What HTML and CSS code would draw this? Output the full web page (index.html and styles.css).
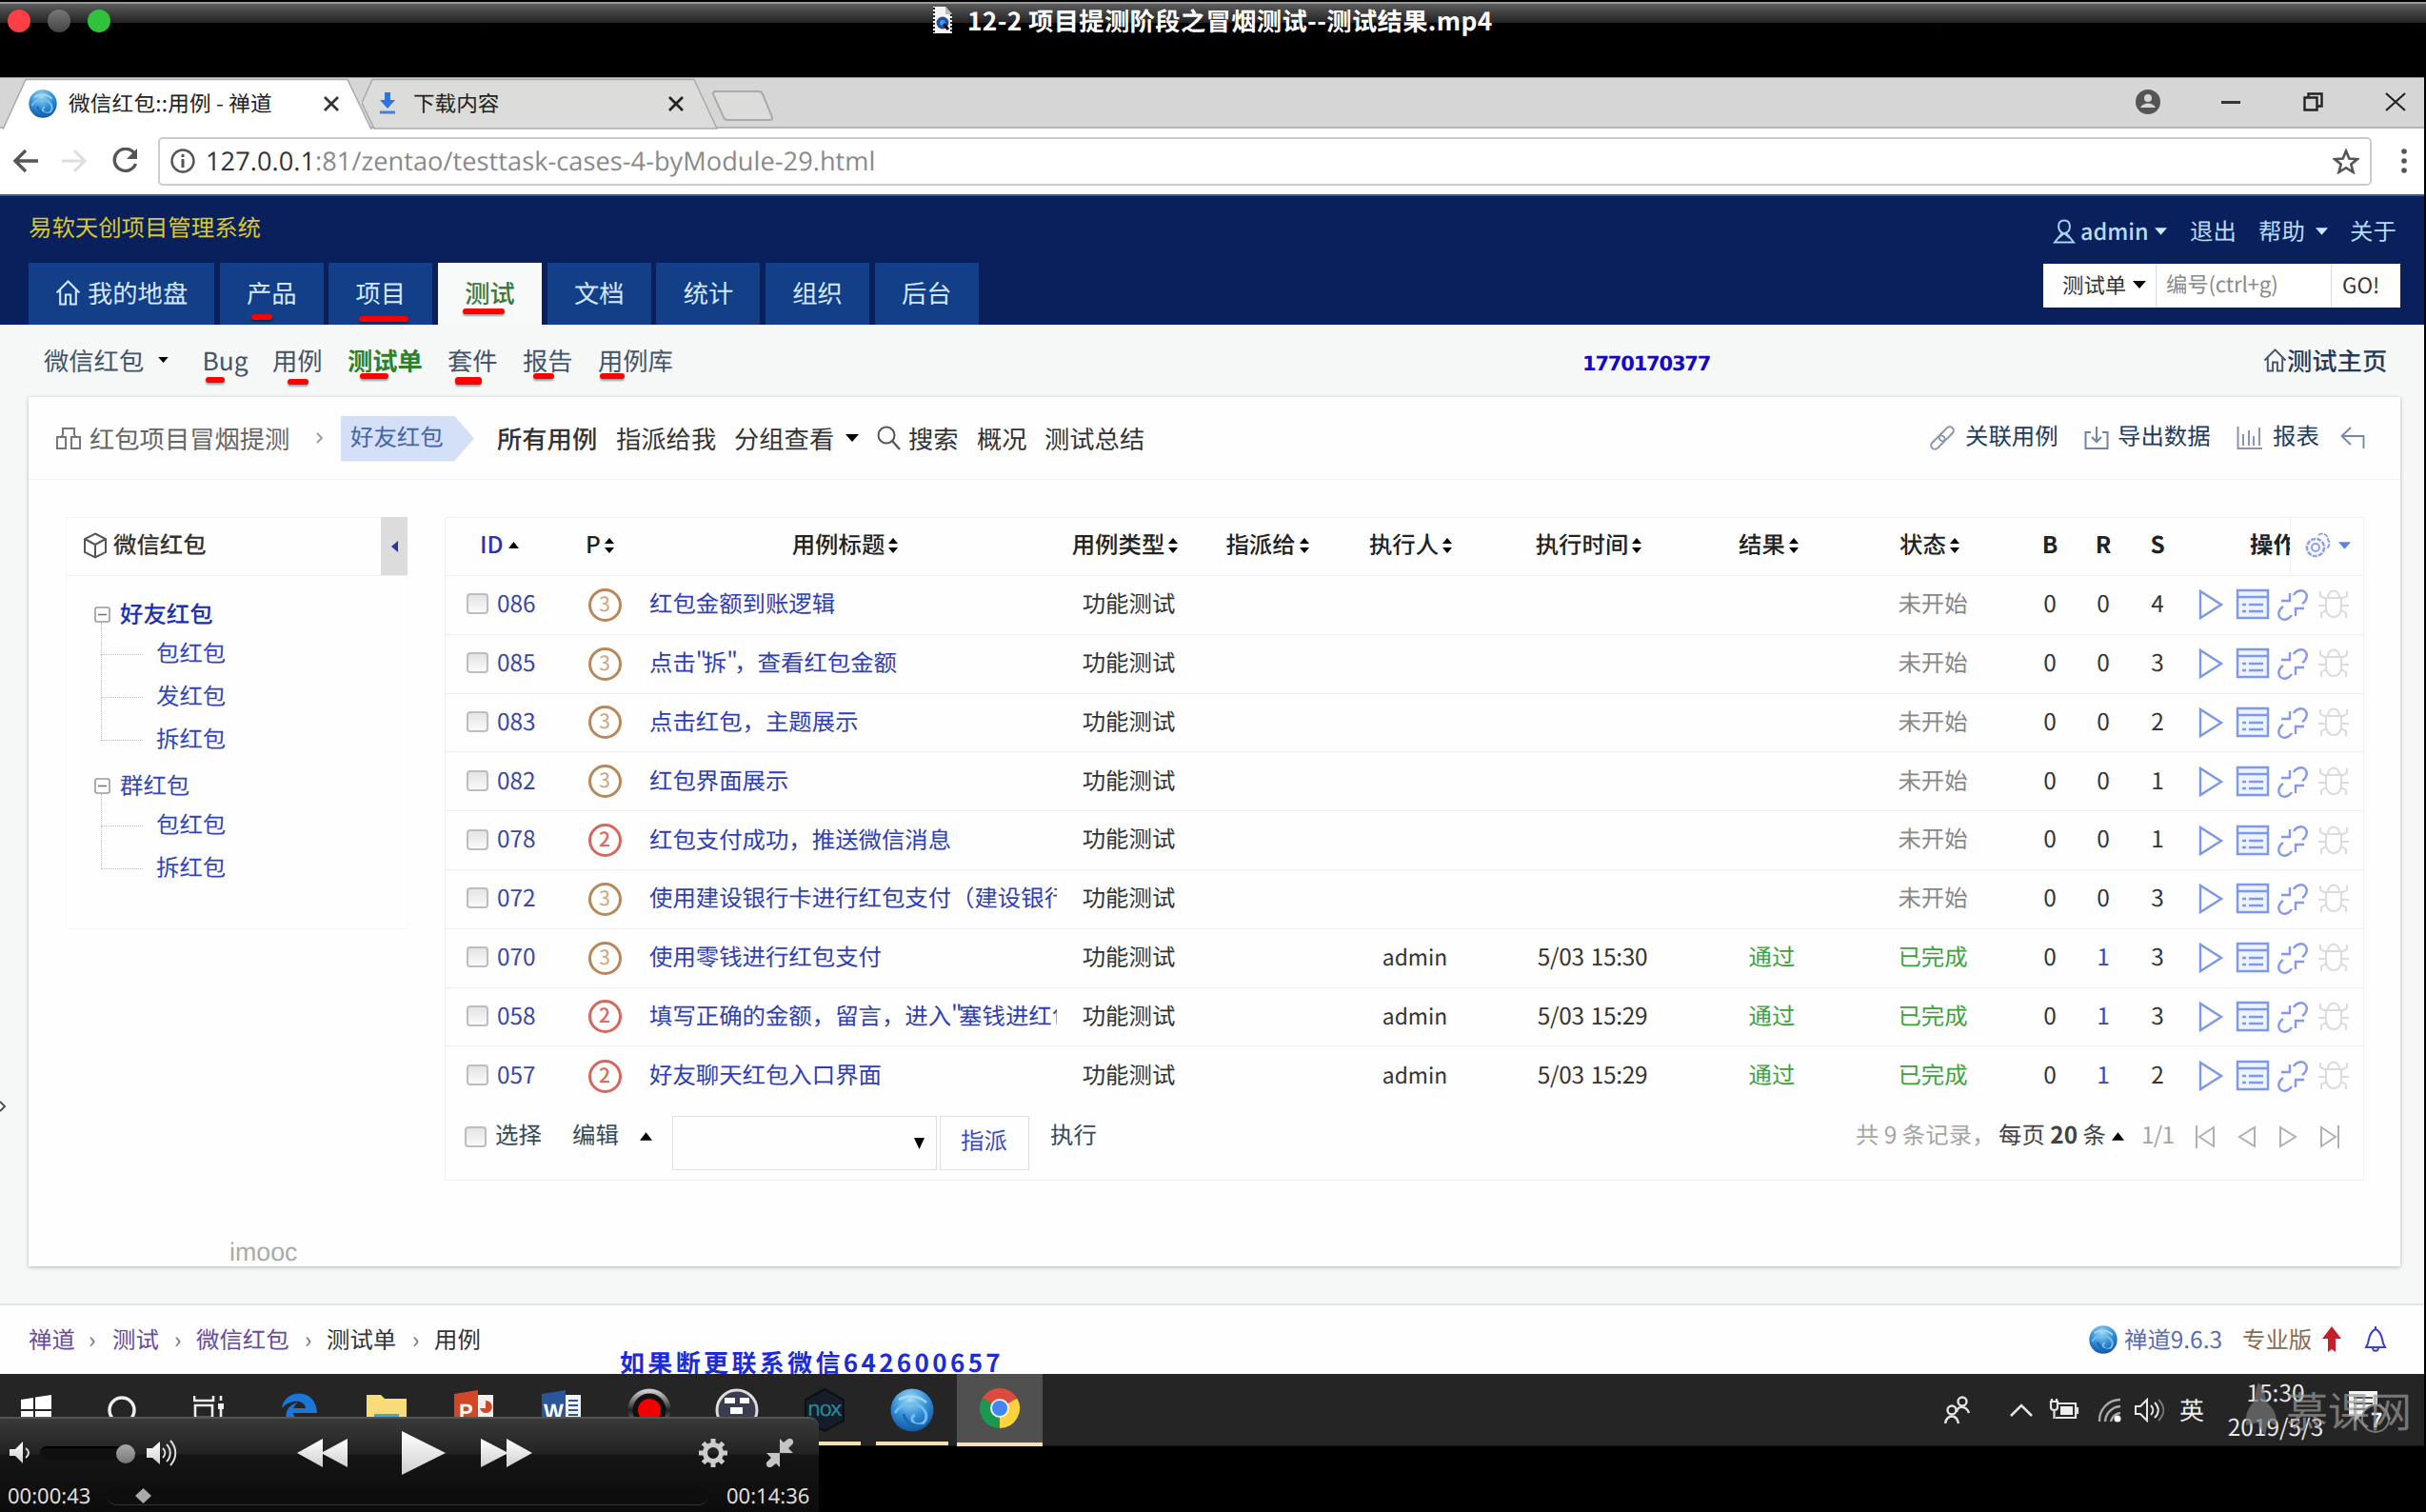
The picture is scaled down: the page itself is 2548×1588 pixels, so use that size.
FILE: index.html
```html
<!DOCTYPE html>
<html lang="zh-CN">
<head>
<meta charset="utf-8">
<title>12-2 项目提测阶段之冒烟测试--测试结果.mp4</title>
<link rel="stylesheet" href="styles.css">
</head>
<body>
<svg class="sprite" aria-hidden="true">
  <defs>
    <radialGradient id="globe" cx="45%" cy="25%" r="80%"><stop offset="0" stop-color="#a5dcf6"/><stop offset=".5" stop-color="#3590d8"/><stop offset="1" stop-color="#0c4f9e"/></radialGradient>
    <linearGradient id="metal" x1="0" y1="0" x2="0" y2="1"><stop offset="0" stop-color="#fff"/><stop offset="1" stop-color="#cfcfcf"/></linearGradient>
    <linearGradient id="ring" x1="0" y1="0" x2="0" y2="1"><stop offset="0" stop-color="#ccc"/><stop offset=".5" stop-color="#222"/><stop offset="1" stop-color="#999"/></linearGradient>
  </defs>
  <symbol id="zen" viewBox="0 0 46 46"><circle cx="23" cy="23" r="22.5" fill="url(#globe)"/><path d="M5 26C12 14 27 14 34 21c6 6 5 15-3 17-8 1-11-8-5-10" fill="none" stroke="#6fc0ec" stroke-width="3"/><path d="M9 12c9-5 20-5 29 3" fill="none" stroke="#a4daf5" stroke-width="2.500"/><path d="M14 27c2 9 11 14 20 12" fill="none" stroke="#1a66b4" stroke-width="3"/></symbol>
  <symbol id="sort" viewBox="0 0 12 18"><path d="M6 1l5 6H1zM6 17l5-6H1z"/></symbol>
  <symbol id="down" viewBox="0 0 14 8"><path d="M0 0h14L7 8z"/></symbol>
  <symbol id="up" viewBox="0 0 14 9"><path d="M0 9h14L7 0z"/></symbol>
  <symbol id="house" viewBox="0 0 26 26"><path d="M1.500 13L13 1.500 24.500 13M5 10v14.500h5.500V15h5v9.500H21V10" fill="none" stroke="currentColor" stroke-width="2"/></symbol>
  <symbol id="minus" viewBox="0 0 17 17"><rect x="1" y="1" width="15" height="15" rx="2" fill="#fff" stroke="#999" stroke-width="1.600"/><path d="M4 8.500h9" stroke="#777" stroke-width="1.600"/></symbol>
  <symbol id="ops" viewBox="0 0 160 34">
    <path d="M2 3v28l22-14z" fill="none" stroke="#7b98e6" stroke-width="2.400"/>
    <path transform="translate(39)" d="M2 2h32v29H2zM2 9h32M7 17h4M14 17h15M7 24h4M14 24h15" fill="#eef4ff" stroke="#7d98ec" stroke-width="2.400"/>
    <path transform="translate(82)" d="M18 7c3-5 9-6 12-3s2 9-3 12M7 19c-5 3-6 9-3 12s9 2 12-3M14 5v8H5M29 21h-9v8" fill="none" stroke="#8598ec" stroke-width="2.400"/>
    <path transform="translate(124)" d="M10 10h16v11c0 12-16 12-16 0zM12 10c0-10 12-10 12 0M10 11L4 8V3M26 11l6-3V3M9 18H2M27 18h7M10 23l-5 3v5M26 23l5 3v5" fill="none" stroke="#dcdcdc" stroke-width="2"/>
  </symbol>
</svg>

<header class="titlebar">
  <div class="lights"><i class="light red"></i><i class="light grey"></i><i class="light green"></i></div>
  <div class="movie">
    <svg width="22" height="30" viewBox="0 0 22 30"><path d="M1 1h13l7 8v20H1z" fill="#f4f4f4"/><path d="M14 1l7 8h-7z" fill="#bbb"/><path d="M2 2v27M20 9v20" stroke="#222" stroke-width="2" stroke-dasharray="2 2"/><circle cx="11" cy="18" r="6.500" fill="#274d96"/><circle cx="11" cy="18" r="3" fill="#27a3ff"/><path d="M12 19l5 6" stroke="#111" stroke-width="3"/></svg>
    <span>12-2 项目提测阶段之冒烟测试--测试结果.mp4</span>
  </div>
</header>

<main class="video">
  <div class="tabstrip">
    <div class="tab on">
      <svg class="shape" width="388" height="54"><path d="M0 54L24 1.500h338L387 54" fill="#fff" stroke="#aaa" stroke-width="1.500"/></svg>
      <svg width="30" height="30"><use href="#zen"/></svg><span>微信红包::用例 - 禅道</span>
      <svg width="16" height="16"><path d="M1 1l14 14M15 1L1 15" stroke="#333" stroke-width="2.800"/></svg>
    </div>
    <div class="tab off">
      <svg class="shape" width="376" height="54"><path d="M0 26L11 1.500h338L373 53H13z" fill="#dcdddb" stroke="#aaa" stroke-width="1.500"/></svg>
      <svg width="18" height="23"><path d="M6 0h6v8h5l-8 9-8-9h5z" fill="#2f72e0"/><path d="M1 21h16" stroke="#4a7fd6" stroke-width="3"/></svg><span>下载内容</span>
      <svg width="16" height="16"><path d="M1 1l14 14M15 1L1 15" stroke="#222" stroke-width="2.800"/></svg>
    </div>
    <svg class="newtab" width="66" height="34"><path d="M2 2h47q3 0 4 3l10 24q1 3-3 3H16q-3 0-4-3L1 5q0-3 3-3z" fill="#dcdcdb" stroke="#aaa" stroke-width="2"/></svg>
    <div class="winctl">
      <svg width="26" height="26"><circle cx="13" cy="13" r="13" fill="#555"/><circle cx="13" cy="9" r="4" fill="#d6d6d6"/><path d="M5 19c3-6 13-6 16 0z" fill="#d6d6d6"/></svg>
      <svg width="20" height="3"><path d="M0 1.500h20" stroke="#333" stroke-width="3"/></svg>
      <svg width="21" height="20"><path d="M1.500 5.500h13v13h-13zM5.500 5V1.500h14v13H15" fill="none" stroke="#222" stroke-width="2.400"/></svg>
      <svg width="22" height="20"><path d="M1 1l20 18M21 1L1 19" stroke="#222" stroke-width="2.200"/></svg>
    </div>
  </div>

  <div class="toolbar">
    <svg width="28" height="26"><path d="M27 13H3M14 2L3 13l11 11" fill="none" stroke="#555" stroke-width="3.400"/></svg>
    <svg width="28" height="26"><path d="M0 13h24M13 2l11 11-11 11" fill="none" stroke="#ddd" stroke-width="3"/></svg>
    <svg width="28" height="28"><path d="M24 6a11.500 11.500 0 1 0 1.500 11" fill="none" stroke="#555" stroke-width="3.400"/><path d="M27 1v11H16z" fill="#555"/></svg>
    <div class="address">
      <svg width="26" height="26"><circle cx="13" cy="13" r="11.500" fill="none" stroke="#555" stroke-width="2.400"/><path d="M13 6v3M13 11v9" stroke="#555" stroke-width="3"/></svg>
      <p><b>127.0.0.1</b>:81/zentao/testtask-cases-4-byModule-29.html</p>
      <svg width="28" height="27"><path d="M14 2.500l3.300 8 8.700.6-6.700 5.400 2.200 8.300L14 20.200l-7.500 4.600 2.200-8.300L2 11.100l8.700-.6z" fill="none" stroke="#555" stroke-width="2.600"/></svg>
    </div>
    <svg class="dots" width="6" height="26"><circle cx="3" cy="3" r="2.800"/><circle cx="3" cy="13" r="2.800"/><circle cx="3" cy="23" r="2.800"/></svg>
  </div>

  <div class="masthead">
    <div class="mast-left">
      <p class="brand">易软天创项目管理系统</p>
      <nav class="mainnav">
        <a class="home"><svg width="27" height="27"><use href="#house"/></svg>我的地盘</a>
        <a>产品<i class="mark m1"></i></a><a>项目<i class="mark m2"></i></a><a class="on">测试<i class="mark m3"></i></a><a>文档</a><a>统计</a><a>组织</a><a>后台</a>
      </nav>
    </div>
    <div class="mast-right">
      <div class="account">
        <svg width="24" height="26"><path d="M12 1.500c8 0 7 11 2 13l8 10H2l8-10C5 12 4 1.500 12 1.500zM6 20l6-5 6 5" fill="none" stroke="#a8d4f8" stroke-width="2"/></svg>
        <b>admin</b><svg class="lt" width="13" height="8"><use href="#down"/></svg><span>退出</span><span>帮助</span><svg class="lt" width="13" height="8"><use href="#down"/></svg><span>关于</span>
      </div>
      <div class="search"><span>测试单<svg width="14" height="8"><use href="#down"/></svg></span><em>编号(ctrl+g)</em><span class="go">GO!</span></div>
    </div>
  </div>

  <div class="body">
    <nav class="subnav">
      <span>微信红包</span><svg width="11" height="6"><use href="#down"/></svg><span>Bug<i class="mark s1"></i></span><span>用例<i class="mark s2"></i></span><b>测试单<i class="mark s3"></i></b><span>套件<i class="mark s4"></i></span><span>报告<i class="mark s5"></i></span><span>用例库<i class="mark s6"></i></span><strong>1770170377</strong><svg width="25" height="27"><use href="#house"/></svg><span class="testhome">测试主页</span>
    </nav>

    <section class="panel">
      <div class="actions">
        <svg width="28" height="25"><path d="M8 9V2h12v7M2 11h9v12H2zM17 11h9v12h-9zM8 9l-2 2M20 9l2 2" fill="none" stroke="#777" stroke-width="2"/></svg>
        <span class="crumb">红包项目冒烟提测</span>
        <svg width="8" height="12"><path d="M1 1l5 5-5 5" fill="none" stroke="#999" stroke-width="1.800"/></svg>
        <span class="tag">好友红包</span>
        <span class="semi">所有用例</span><span>指派给我</span><span>分组查看</span><svg width="14" height="8"><use href="#down"/></svg>
        <svg width="25" height="26"><circle cx="10" cy="10" r="8.500" fill="none" stroke="#555" stroke-width="2"/><path d="M16 16l8 9" stroke="#555" stroke-width="2.400"/></svg>
        <span>搜索</span><span>概况</span><span>测试总结</span>
        <svg width="28" height="26"><g transform="rotate(-45 14 13)" fill="none" stroke="#8a94ac" stroke-width="2"><rect x="-1" y="9" width="17" height="8" rx="4"/><rect x="11" y="9" width="18" height="8" rx="4"/></g></svg>
        <span class="act">关联用例</span>
        <svg width="26" height="26"><path d="M7 7H1.500v17h23V7H19M13 1v15M8 12l5 5 5-5" fill="none" stroke="#7484a4" stroke-width="2"/></svg>
        <span class="act">导出数据</span>
        <svg width="28" height="26"><path d="M1.500 1v23H27M7 21V9M13 21V5M18 21V11M24 21V2" fill="none" stroke="#8a94ac" stroke-width="2"/></svg>
        <span class="act">报表</span>
        <svg width="26" height="24"><path d="M11 1L1.500 10 11 19M2 10h22.500v13" fill="none" stroke="#7484a4" stroke-width="1.800"/></svg>
      </div>

      <div class="columns">
        <aside class="side">
          <h2><svg width="26" height="28"><path d="M13 1.500l11 5.500v14l-11 5.500L2 21V7zM2 7l11 6 11-6M13 13v13" fill="none" stroke="#555" stroke-width="2"/></svg>微信红包<i class="fold"><svg width="7" height="12"><path d="M7 0v12L0 6z" fill="#2b35a8"/></svg></i></h2>
          <div class="tree">
            <p class="node strong"><svg width="17" height="17"><use href="#minus"/></svg>好友红包</p>
            <ul><li>包红包</li><li>发红包</li><li>拆红包</li></ul>
            <p class="node second"><svg width="17" height="17"><use href="#minus"/></svg>群红包</p>
            <ul><li>包红包</li><li>拆红包</li></ul>
          </div>
        </aside>

        <div class="cases">
          <div class="row head">
            <span class="hid">ID<svg width="11" height="7"><use href="#up"/></svg></span><span class="c hpri">P<svg width="12" height="18"><use href="#sort"/></svg></span><span class="c htitle">用例标题<svg width="12" height="18"><use href="#sort"/></svg></span><span class="c htype">用例类型<svg width="12" height="18"><use href="#sort"/></svg></span><span class="c hto">指派给<svg width="12" height="18"><use href="#sort"/></svg></span><span class="c hby">执行人<svg width="12" height="18"><use href="#sort"/></svg></span><span class="c htime">执行时间<svg width="12" height="18"><use href="#sort"/></svg></span><span class="c hres">结果<svg width="12" height="18"><use href="#sort"/></svg></span><span class="c hstat">状态<svg width="12" height="18"><use href="#sort"/></svg></span><b class="c">B</b><b class="c">R</b><b class="c">S</b>
            <div class="hops"><span><b>操作</b></span><svg width="27" height="28"><g fill="none" stroke="#8aa0ee" stroke-width="2"><circle cx="11" cy="16" r="9" stroke-dasharray="5 1.200" stroke-width="2.600"/><circle cx="11" cy="16" r="4"/><path d="M14 3c5-4 11 1 10 5 3 3 1 9-2 9" stroke-dasharray="5 1.200"/></g></svg><svg class="bl" width="13" height="8"><use href="#down"/></svg></div>
          </div>
          <div class="row"><span class="id"><i class="cb"></i>086</span><span class="c"><i class="pri p3">3</i></span><a>红包金额到账逻辑</a><span class="c">功能测试</span><span></span><span></span><span></span><span></span><span class="c wait">未开始</span><span class="c">0</span><span class="c">0</span><span class="c">4</span><svg class="ops" width="160" height="34"><use href="#ops"/></svg></div>
          <div class="row"><span class="id"><i class="cb"></i>085</span><span class="c"><i class="pri p3">3</i></span><a>点击<q>"</q>拆<q>"</q>，查看红包金额</a><span class="c">功能测试</span><span></span><span></span><span></span><span></span><span class="c wait">未开始</span><span class="c">0</span><span class="c">0</span><span class="c">3</span><svg class="ops" width="160" height="34"><use href="#ops"/></svg></div>
          <div class="row"><span class="id"><i class="cb"></i>083</span><span class="c"><i class="pri p3">3</i></span><a>点击红包，主题展示</a><span class="c">功能测试</span><span></span><span></span><span></span><span></span><span class="c wait">未开始</span><span class="c">0</span><span class="c">0</span><span class="c">2</span><svg class="ops" width="160" height="34"><use href="#ops"/></svg></div>
          <div class="row"><span class="id"><i class="cb"></i>082</span><span class="c"><i class="pri p3">3</i></span><a>红包界面展示</a><span class="c">功能测试</span><span></span><span></span><span></span><span></span><span class="c wait">未开始</span><span class="c">0</span><span class="c">0</span><span class="c">1</span><svg class="ops" width="160" height="34"><use href="#ops"/></svg></div>
          <div class="row"><span class="id"><i class="cb"></i>078</span><span class="c"><i class="pri p2">2</i></span><a>红包支付成功，推送微信消息</a><span class="c">功能测试</span><span></span><span></span><span></span><span></span><span class="c wait">未开始</span><span class="c">0</span><span class="c">0</span><span class="c">1</span><svg class="ops" width="160" height="34"><use href="#ops"/></svg></div>
          <div class="row"><span class="id"><i class="cb"></i>072</span><span class="c"><i class="pri p3">3</i></span><a>使用建设银行卡进行红包支付（建设银行</a><span class="c">功能测试</span><span></span><span></span><span></span><span></span><span class="c wait">未开始</span><span class="c">0</span><span class="c">0</span><span class="c">3</span><svg class="ops" width="160" height="34"><use href="#ops"/></svg></div>
          <div class="row"><span class="id"><i class="cb"></i>070</span><span class="c"><i class="pri p3">3</i></span><a>使用零钱进行红包支付</a><span class="c">功能测试</span><span></span><span class="c who">admin</span><span class="c when">5/03 15:30</span><span class="c pass">通过</span><span class="c pass">已完成</span><span class="c">0</span><span class="c one">1</span><span class="c">3</span><svg class="ops" width="160" height="34"><use href="#ops"/></svg></div>
          <div class="row"><span class="id"><i class="cb"></i>058</span><span class="c"><i class="pri p2">2</i></span><a>填写正确的金额，留言，进入<q>"</q>塞钱进红包</a><span class="c">功能测试</span><span></span><span class="c who">admin</span><span class="c when">5/03 15:29</span><span class="c pass">通过</span><span class="c pass">已完成</span><span class="c">0</span><span class="c one">1</span><span class="c">3</span><svg class="ops" width="160" height="34"><use href="#ops"/></svg></div>
          <div class="row last"><span class="id"><i class="cb"></i>057</span><span class="c"><i class="pri p2">2</i></span><a>好友聊天红包入口界面</a><span class="c">功能测试</span><span></span><span class="c who">admin</span><span class="c when">5/03 15:29</span><span class="c pass">通过</span><span class="c pass">已完成</span><span class="c">0</span><span class="c one">1</span><span class="c">2</span><svg class="ops" width="160" height="34"><use href="#ops"/></svg></div>
          <div class="foot">
            <i class="cb"></i><span>选择</span><span>编辑</span><svg width="13" height="9"><use href="#up"/></svg>
            <div class="select"><svg width="11" height="12"><path d="M0 0h11L5.500 12z"/></svg></div><div class="btn">指派</div><span>执行</span>
            <span class="pg">共 9 条记录，</span><span class="size">每页 <b>20</b> 条</span><svg width="13" height="9"><use href="#up"/></svg><span class="pg frac">1/1</span>
            <svg class="pi" width="22" height="26"><path d="M2 1v24M20 3v20L5 13z"/></svg><svg class="pi" width="20" height="26"><path d="M18 3v20L2 13z"/></svg><svg class="pi" width="20" height="26"><path d="M2 3v20l16-10z"/></svg><svg class="pi" width="22" height="26"><path d="M20 1v24M2 3v20l15-10z"/></svg>
          </div>
        </div>
      </div>
      <p class="imooc">imooc</p>
    </section>
    <svg class="pointer" width="8" height="16"><path d="M0 3l5 5-5 5" fill="#fff" stroke="#445" stroke-width="1.800"/></svg>
  </div>

  <footer class="pagefoot">
    <span class="v">禅道</span><i>›</i><span class="v">测试</span><i>›</i><span class="v">微信红包</span><i>›</i><span>测试单</span><i>›</i><span>用例</span>
    <strong>如果断更联系微信642600657</strong>
    <svg width="30" height="30"><use href="#zen"/></svg><span class="ver">禅道9.6.3</span><span class="pro">专业版</span>
    <svg width="20" height="28"><path d="M10 0l10 13h-6v14l-4-3-4 3V13H0z" fill="#c4202a"/></svg>
    <svg width="24" height="28"><path d="M12 3c-7 3-7 11-8 15l-2 4h20l-2-4c-1-4-1-12-8-15zM12 0v3M9 22c0 5 6 5 6 0" fill="none" stroke="#3a3fc8" stroke-width="2"/></svg>
  </footer>

  <div class="taskbar">
    <svg width="32" height="32"><path d="M0 5l13-2v12H0zM15 2.500L32 0v15H15zM0 17h13v12L0 27zM15 17h17v15l-17-2.500z" fill="#fff"/></svg>
    <svg width="30" height="30"><circle cx="15" cy="15" r="13" fill="none" stroke="#eee" stroke-width="3.400"/></svg>
    <svg width="32" height="30"><path d="M1 0v5h20V0M2 10h18v13H2zM1 30v-4h20v4M29 0v5M29 14v16" fill="none" stroke="#eee" stroke-width="2.600"/><path d="M26 8h6v6h-6z" fill="#eee"/></svg>
    <svg width="40" height="38"><path d="M1 17C3-3 37-6 38 22H13c1 9 13 11 22 6v7C18 43 2 35 6 21c2-6 7-9 12-10-3 2-4 4-5 6h13c-1-9-16-10-25 0z" fill="#1a76d8"/></svg>
    <svg width="42" height="36"><path d="M0 2h15l4 4h23v30H0z" fill="#f9dc7a"/><path d="M8 22h26v14H8z" fill="#38a9d8"/></svg>
    <svg width="42" height="42" viewBox="0 0 42 42"><path d="M20 5h21v32H20z" fill="#f4f0ee"/><path d="M0 4L25 0v42L0 38z" fill="#d24726"/><path d="M33 11v8h-6a6.500 6.500 0 1 0 6-8z" fill="#d24726"/><path d="M28 30h10" stroke="#d24726" stroke-width="2.500"/><text x="5" y="30" class="glyph">P</text></svg>
    <svg width="42" height="42" viewBox="0 0 42 42"><path d="M20 5h21v32H20z" fill="#f4f4f8"/><path d="M0 4L25 0v42L0 38z" fill="#2a5699"/><path d="M28 11h10M28 16h10M28 21h10M28 26h10" stroke="#2a5699" stroke-width="2.200"/><text x="2" y="30" class="glyph">W</text></svg>
    <svg width="46" height="46"><circle cx="23" cy="23" r="20" fill="#111" stroke="url(#ring)" stroke-width="5"/><circle cx="23" cy="23" r="12" fill="#f00000"/></svg>
    <svg width="46" height="46"><circle cx="23" cy="23" r="21" fill="#3a3d50" stroke="#ddd" stroke-width="3"/><path d="M10 10h11v6H10zM26 10h10v6H26zM16 20h13v7H16z" fill="#fff"/></svg>
    <svg width="42" height="46"><path d="M21 1l20 11v22L21 45 1 34V12z" fill="#161d28" stroke="#0b1016" stroke-width="2"/><text x="3" y="29" class="nox">nox</text></svg>
    <svg width="46" height="46"><use href="#zen"/></svg>
    <div class="chrome"><svg width="44" height="44" viewBox="-22 -22 44 44"><path d="M0 0L-18.200-10.500A21 21 0 0 1 18.200-10.500z" fill="#dd4b3e"/><path d="M0 0L18.200-10.500A21 21 0 0 1 0 21z" fill="#fdd23c"/><path d="M0 0L0 21A21 21 0 0 1-18.200-10.500z" fill="#1a9850"/><path d="M0-9.500h18.800l-.6-1H-4z" fill="#dd4b3e"/><circle r="10" fill="#eee"/><circle r="8" fill="#4285f4"/></svg></div>
    <svg width="28" height="30"><g fill="none" stroke="#e4e4e4" stroke-width="2.400"><circle cx="19" cy="6" r="4.500"/><path d="M13 17c1-7 10-7 13 1"/><circle cx="8" cy="15" r="4.500"/><path d="M1 29c2-10 12-10 14 0"/></g></svg>
    <svg width="24" height="14"><path d="M1 13L12 2l11 11" fill="none" stroke="#e4e4e4" stroke-width="2.600"/></svg>
    <svg width="32" height="24"><path d="M9 5h19v15H7M30 9v7M2 3h7v6c0 4-7 4-7 0zM3 0v3M8 0v3M5.500 12v9" fill="none" stroke="#e4e4e4" stroke-width="2.200"/><path d="M12 8h13v9H12z" fill="#eee"/></svg>
    <svg width="26" height="26"><g fill="none" stroke="#aaa" stroke-width="2.400"><path d="M2 25A22 22 0 0 1 24 2M8 25A17 17 0 0 1 24 9M14 25a11 11 0 0 1 10-9"/></g><circle cx="21" cy="22" r="3.500" fill="#fff"/></svg>
    <svg width="32" height="26"><path d="M1 9h5l7-7v22l-7-7H1zM17 8c3 3 3 7 0 10M21 5c5 5 5 11 0 16" fill="none" stroke="#e8e8e8" stroke-width="2"/><path d="M25 2c7 7 7 15 0 22" fill="none" stroke="#777" stroke-width="2"/></svg>
    <span class="ime">英</span>
    <div class="clock"><span>15:30</span><span>2019/5/3</span></div>
    <div class="notice"><svg width="48" height="48"><path d="M3 4h30v26H15l-6 6v-6H3z" fill="#f4f4f4"/><path d="M8 11h20M8 17h20M8 23h12" stroke="#555" stroke-width="2"/><circle cx="31" cy="33" r="14" fill="#222" stroke="#777" stroke-width="2"/><text x="26" y="42" class="glyph">7</text></svg></div>
    <div class="mark-imooc"><svg width="34" height="56"><path d="M14 0c8 8 6 16 10 22 6 6 10 12 9 24l-9-6-3 16-8-14-12 3C0 30 5 26 9 20c3-6 1-12 5-20z"/></svg><span>慕课网</span></div>
  </div>

  <div class="player">
    <div class="controls">
      <svg width="22" height="24"><path d="M0 8h6l8-8v23l-8-8H0z" fill="url(#metal)"/><path d="M17 7c4 3 4 7 0 10" fill="none" stroke="#ddd" stroke-width="2"/></svg>
      <div class="volume"><i></i></div>
      <svg width="32" height="28"><path d="M0 9h6l8-7v24l-8-7H0z" fill="url(#metal)"/><path d="M17 9c3 3 3 7 0 10M21 5c5 5 5 13 0 18M25 1c7 8 7 18 0 26" fill="none" stroke="#ddd" stroke-width="2"/></svg>
      <svg width="54" height="32"><path d="M0 16L27 1v14L53 1v30L27 17v14z" fill="url(#metal)"/></svg>
      <svg width="48" height="48"><path d="M1 1l46 23L1 47z" fill="url(#metal)"/></svg>
      <svg width="54" height="32"><path d="M54 16L27 1v14L0 1v30l27-14v14z" fill="url(#metal)"/></svg>
      <svg width="32" height="32" viewBox="-16 -16 32 32"><circle r="8.500" fill="none" stroke="#ccc" stroke-width="5"/><path d="M0-15v6M0 9v6M-15 0h6M9 0h6M-10.500-10.500l4 4M6.500 6.500l4 4M-10.500 10.500l4-4M6.500-6.500l4-4" stroke="#ccc" stroke-width="5"/></svg>
      <svg width="30" height="30"><path d="M15 0l4 4 5-4q6-1 5 5l-5 5 5 5H15zM15 30l-4-4-5 4q-6 1-5-5l5-5-5-5h14z" fill="#c4c4c4"/></svg>
    </div>
    <div class="progress"><span>00:00:43</span><div class="track"><svg width="17" height="16"><path d="M8.500 0L17 8l-8.500 8L0 8z" fill="#aaa"/></svg></div><span>00:14:36</span></div>
  </div>
</main>
</body>
</html>
```
FILE: styles.css
```css
* { box-sizing: border-box; margin: 0; padding: 0; }
html { background: #000; }
body {
  width: 2548px; height: 1588px; overflow: hidden; background: #000;
  font-family: "Noto Sans CJK SC", "Noto Sans", sans-serif;
  font-size: 24.4px; line-height: 1; color: #333;
  text-rendering: geometricPrecision; white-space: nowrap;
}
svg { display: block; flex: none; }
i, em { font-style: normal; }
q { quotes: none; letter-spacing: -3.600px; }
ul { list-style: none; }
.sprite { position: absolute; width: 0; height: 0; }

/* player window title */
.titlebar {
  height: 81px; display: flex; padding-top: 7px;
  background: linear-gradient(#000 2px, #999 2px, #999 4px, #5c5c5c 4px, #222 24px, #020202 24px, #000 40px);
}
.lights { display: flex; gap: 18px; padding: 3px 0 0 8px; width: 979px; }
.light { width: 24px; height: 24px; border-radius: 50%; }
.red { background: #fc3f44; }
.grey { background: linear-gradient(#777, #444); }
.green { background: #2fc23a; }
.movie { display: flex; gap: 15px; height: 28px; align-items: center; color: #fff; font-weight: 700; font-size: 26.3px; letter-spacing: .35px; }

.video { position: relative; width: 2546px; height: 1507px; }

/* browser tabs */
.tabstrip { height: 54px; background: #d6d6d6; border-top: 1px solid #999; border-bottom: 2px solid #b4b4b4; display: flex; }
.tab { position: relative; display: grid; align-items: center; height: 53px; font-size: 22.6px; color: #222; }
.tab > * { position: relative; }
.tab .shape { position: absolute; left: 0; top: 0; }
.tab.on { margin-left: 3px; width: 387px; padding-left: 27px; grid-template-columns: 42px 268px 20px; z-index: 1; letter-spacing: .2px; }
.tab.off { margin-left: -10px; width: 368px; padding-left: 18px; grid-template-columns: 36px 268px 20px; }
.newtab { margin-top: 12px; }
.winctl { display: grid; align-items: center; grid-template-columns: 90px 86px 86px 30px; margin-left: 1429px; height: 50px; }

.toolbar { height: 69px; background: #fff; display: grid; align-items: center; grid-template-columns: 52px 52px 49px 2325px 20px; padding: 0 0 1px 13px; }
.address { height: 51px; border: 2px solid #ccc; border-radius: 5px; display: grid; grid-template-columns: 37px 2234px 30px; align-items: center; padding-left: 11px; }
.address p { font: 27.2px "Open Sans", sans-serif; color: #8a8a8a; letter-spacing: .04px; padding-bottom: 1px; }
.address b { font-weight: 400; color: #333; }
.dots { margin-left: 31px; fill: #555; }

/* site header */
.masthead { height: 137px; background: #0a205c; border-top: 2px solid #3b5a8c; display: flex; justify-content: space-between; padding: 0 24px 0 31px; }
.brand { color: #d9c92c; height: 70px; line-height: 65px; margin-left: -1px; }
.mainnav { display: flex; gap: 5.700px; font-size: 26.3px; color: #d4e8ff; margin-left: -1px; }
.mainnav a { position: relative; width: 109px; height: 65px; display: flex; align-items: center; justify-content: center; background: #123f88; padding-bottom: 2px; }
.mainnav .home { width: 195px; justify-content: flex-start; padding-left: 28px; gap: 7px; }
.mainnav .on { background: #f8f9f9; color: #3b7a3a; font-weight: 500; }
.mark { position: absolute; height: 6px; border-radius: 3px; background: #f00; box-shadow: 0 2px 2px rgba(0,0,0,.35); }
.m1 { left: 33px; top: 54px; width: 22px; }
.m2 { left: 32px; top: 56px; width: 52px; }
.m3 { left: 26px; top: 48px; width: 44px; }
.account { display: grid; grid-template-columns: 29px 78px 37px 72px 60px 36px 54px; align-items: center; height: 71px; padding: 3px 0 0 10px; color: #b6dcfa; }
.account b { font-weight: 500; font-size: 23.400px; }
.lt { fill: #cfe8ff; }
.search { display: flex; height: 46px; width: 375px; background: #fff; font-size: 22.4px; align-items: center; }
.search span { width: 118px; display: flex; align-items: center; gap: 7px; padding: 0 0 2px 20px; }
.search em { width: 185px; height: 46px; line-height: 43px; border: solid #d5dde8; border-width: 0 1px; color: #8a8a8a; padding-left: 10px; letter-spacing: -.2px; }
.search .go { width: 72px; padding-left: 11px; }

.body { position: relative; height: 1028px; background: #f6f7f7; }
.subnav { height: 76px; padding: 0 0 2px 46px; display: grid; align-items: center; font-size: 26.3px; color: #44546a; grid-template-columns: 120px 46.5px 73.5px 79px 105px 79px 79px 1034px 715px 25px 120px; }
.subnav > * { position: relative; }
.subnav b { color: #2f8026; }
.subnav strong { font: 700 21px "DejaVu Sans", sans-serif; color: #1408c4; letter-spacing: -1.200px; padding-top: 7px; }
.testhome { color: #223a5c; font-weight: 500; }
.s1 { left: 3px; top: 31px; width: 20px; }
.s2 { left: 16px; top: 33px; width: 22px; }
.s3 { left: 13px; top: 27px; width: 30px; }
.s4 { left: 8px; top: 31px; width: 28px; height: 8px; }
.s5 { left: 11px; top: 27px; width: 22px; }
.s6 { left: 2px; top: 27px; width: 26px; }
.pointer { position: absolute; left: 0; top: 813px; }

.panel { margin-left: 30px; width: 2491px; height: 913px; background: #fefefe; box-shadow: 0 1px 4px rgba(0,0,0,.28); }
.actions { height: 87px; border-bottom: 1px solid #f0f3f5; display: grid; align-items: center; padding-left: 28px; font-size: 26.3px;
  grid-template-columns: 36px 238px 26px 164px 125px 124px 117px 33px 33px 72px 71px 929px 38px 125px 35px 125px 38px 71px 30px; }
.actions .crumb { color: #666; }
.semi { font-weight: 500; }
.tag { width: 140px; height: 48px; line-height: 44px; margin-top: 1px; padding-left: 10px; font-size: 24.4px; background: #d4e0f8; color: #4565a8; clip-path: polygon(0 0, 119px 0, 100% 50%, 119px 100%, 0 100%); }
.actions .act { font-size: 24.4px; color: #223a5c; padding-bottom: 4px; }

.columns { display: flex; gap: 38px; padding: 39px 0 0 39px; }
.side { width: 360px; height: 433px; border: 1px solid #f5f6f7; border-right-color: #fafafa; }
.side h2 { height: 61px; border-bottom: 1px solid #eef0f1; display: flex; align-items: center; gap: 6px; padding: 0 0 3px 17px; font-size: 24.4px; font-weight: 500; }
.fold { margin: 2px 0 0 auto; width: 28px; height: 61px; background: #dcdcdc; display: flex; align-items: center; justify-content: center; }
.tree { padding: 19px 0 0 29px; color: #3447b8; }
.node { display: flex; align-items: center; gap: 10px; height: 42px; }
.node.strong { font-weight: 500; color: #1c2fae; }
.node.second { height: 49px; margin-bottom: -4px; }
.tree ul { margin-left: 7px; }
.tree li { position: relative; height: 45px; line-height: 40px; padding-left: 58px; }
.tree li::before { content: ""; position: absolute; left: 0; top: -23px; width: 43px; height: 44px; border: dotted #bbb; border-width: 0 0 1.500px 1.500px; }
.tree li:first-child::before { top: -12px; height: 33px; }

.cases { width: 2016px; height: 697px; border: 1px solid #f0f1f2; }
.row { display: grid; height: 61.8px; align-items: center; border-bottom: 1px solid #ecf0f3; margin-left: -1px; padding-bottom: 2px; grid-template-columns: 120px 95px 430px 147px 148px 156px 216px 162px 176px 72px 40px 74px 180px; }
.row > a { color: #3040b4; width: 428px; overflow: hidden; line-height: 1.4; }
.row.last { border: 0; }
.c { display: flex; justify-content: center; align-items: center; gap: 3px; }
.row.head { height: 61px; font-weight: 500; color: #222; padding-bottom: 3px; }
.hid { color: #2b35a8; padding-left: 37px; display: flex; align-items: center; gap: 5px; }
.hpri { padding-right: 8px; }
.htitle { padding-right: 18px; }
.htype { padding-right: 7px; }
.hto { padding-right: 3px; }
.hby { padding-right: 6px; }
.htime { padding-right: 4px; }
.hres { padding-right: 4px; }
.hstat { padding-right: 4px; }
.hops { display: flex; align-items: center; height: 60px; margin: -2px 0; }
.hops span { width: 103px; height: 60px; padding-left: 60px; overflow: hidden; display: flex; align-items: center; border-right: 1px solid #eef0f1; }
.hops svg { margin-left: 15px; }
.hops .bl { fill: #5b86dc; margin-left: 8px; }
.id { display: flex; align-items: center; gap: 9px; padding-left: 23px; color: #3b46a4; }
.who { font-size: 22.800px; padding-left: 2px; }
.when { letter-spacing: -.3px; word-spacing: 2px; padding-left: 3px; }
.cb { display: block; width: 23px; height: 22px; border: 2px solid #bdbdbd; border-radius: 4px; background: linear-gradient(#e4e4e4, #fafafa); }
.pri { width: 35px; height: 35px; border: 3px solid; border-radius: 50%; display: flex; justify-content: center; align-items: center; font-size: 21px; padding-bottom: 2px; margin: 2px 0 0 1px; }
.p3 { border-color: #b8875a; color: #cfa780; }
.p2 { border-color: #d8665a; color: #dc6a5e; font-weight: 500; }
.wait { color: #888; padding-left: 2px; }
.pass { color: #3fa33c; padding-left: 2px; }
.one { color: #3447b8; }
.ops { margin: 2px 0 0 6px; }

.foot { display: grid; height: 79px; align-items: center; margin-left: -1px; padding-left: 21px; color: #344a58;
  grid-template-columns: 32px 81px 71px 34px 281px 116px 846px 150px 119px 31px 56px 45px 43px 43px 30px; }
.foot > * { margin-bottom: 14px; }
.foot > span { margin-bottom: 16px; }
.foot > .select, .foot > .btn { height: 57px; border: 1px solid #dde0dc; margin-bottom: 0; }
.select { width: 278px; display: flex; align-items: center; justify-content: flex-end; padding-right: 12px; }
.btn { width: 94px; color: #3b4cc0; line-height: 49px; padding-left: 21px; }
.pg { color: #a5a5a5; }
.size { color: #444; }
.frac { letter-spacing: -.8px; }
.pi { fill: none; stroke: #b0b0b0; stroke-width: 2; }
.imooc { font: 26.800px "Liberation Sans", sans-serif; color: #aaa; padding: 60px 0 0 211px; }

.pagefoot { height: 74px; background: #fefefe; border-top: 2px solid #dfe6ec; display: grid; align-items: center; padding-left: 30px; color: #333;
  grid-template-columns: 63px 25px 65px 23px 114px 23px 90px 23px 195px 1543px 37px 124px 84px 44px 30px; }
.pagefoot .v { color: #6a4a9c; }
.pagefoot i { color: #777; }
.pagefoot strong { color: #1c2bd4; font-size: 26px; letter-spacing: 3.350px; align-self: end; height: 29px; line-height: 33px; }
.ver { color: #5a6cae; }
.pro { color: #8a6a50; }

.taskbar { position: relative; height: 76px; background: #252525; border-bottom: 1px solid #111; display: grid; align-items: center; padding-left: 22px;
  grid-template-columns: 91px 90px 92px 90px 92px 92px 90px 92px 94px 90px 70px 1037px 69px 41px 51px 39px 47px 52px 123px 60px; }
.taskbar::after { content: ""; position: absolute; left: 840px; bottom: 0; width: 156px; height: 4px; background: linear-gradient(90deg, #f8dfb4 64px, transparent 64px 80px, #f8dfb4 80px); }
.chrome { width: 90px; height: 76px; background: #505050; border-bottom: 4px solid #f8dfb4; display: flex; align-items: center; justify-content: center; }
.glyph { font: 700 22px "Liberation Sans", sans-serif; fill: #fff; }
.nox { font: 22px "DejaVu Sans", sans-serif; letter-spacing: -1.500px; fill: #248b98; }
.ime { font-size: 26px; color: #eee; }
.clock { display: flex; flex-direction: column; align-items: center; width: 98px; gap: 12px; color: #e8e8e8; }
.mark-imooc { position: absolute; left: 2358px; top: 9px; display: flex; gap: 9px; color: #999; opacity: .7; font-size: 44px; line-height: 56px; fill: #777; }

/* playback controls */
.player { position: absolute; left: 0; top: 1407px; width: 860px; height: 100px; border-radius: 0 10px 0 0; border-top: 2px solid #555; background: linear-gradient(#3a3a3a, #222 37px, #151515 38px, #0c0c0c); }
.controls { display: grid; align-items: center; height: 72px; padding-left: 10px; grid-template-columns: 32px 112px 158px 109px 84px 228px 71px 30px; }
.volume { width: 100px; height: 14px; border-radius: 7px; background: #101010; border-top: 2px solid #000; display: flex; align-items: center; justify-content: flex-end; }
.volume i { width: 20px; height: 20px; border-radius: 50%; background: linear-gradient(#aaa, #777); flex: none; }
.progress { display: flex; align-items: center; padding: 0 8px; font: 22px "Noto Sans", sans-serif; color: #ddd; height: 18px; }
.progress span { width: 89px; }
.track { width: 632px; height: 20px; margin: 0 19px 0 15px; border-radius: 10px; border: solid #333; border-width: 0 0 1px; background: #0e0e0e; display: flex; align-items: center; padding-left: 30px; }
```
